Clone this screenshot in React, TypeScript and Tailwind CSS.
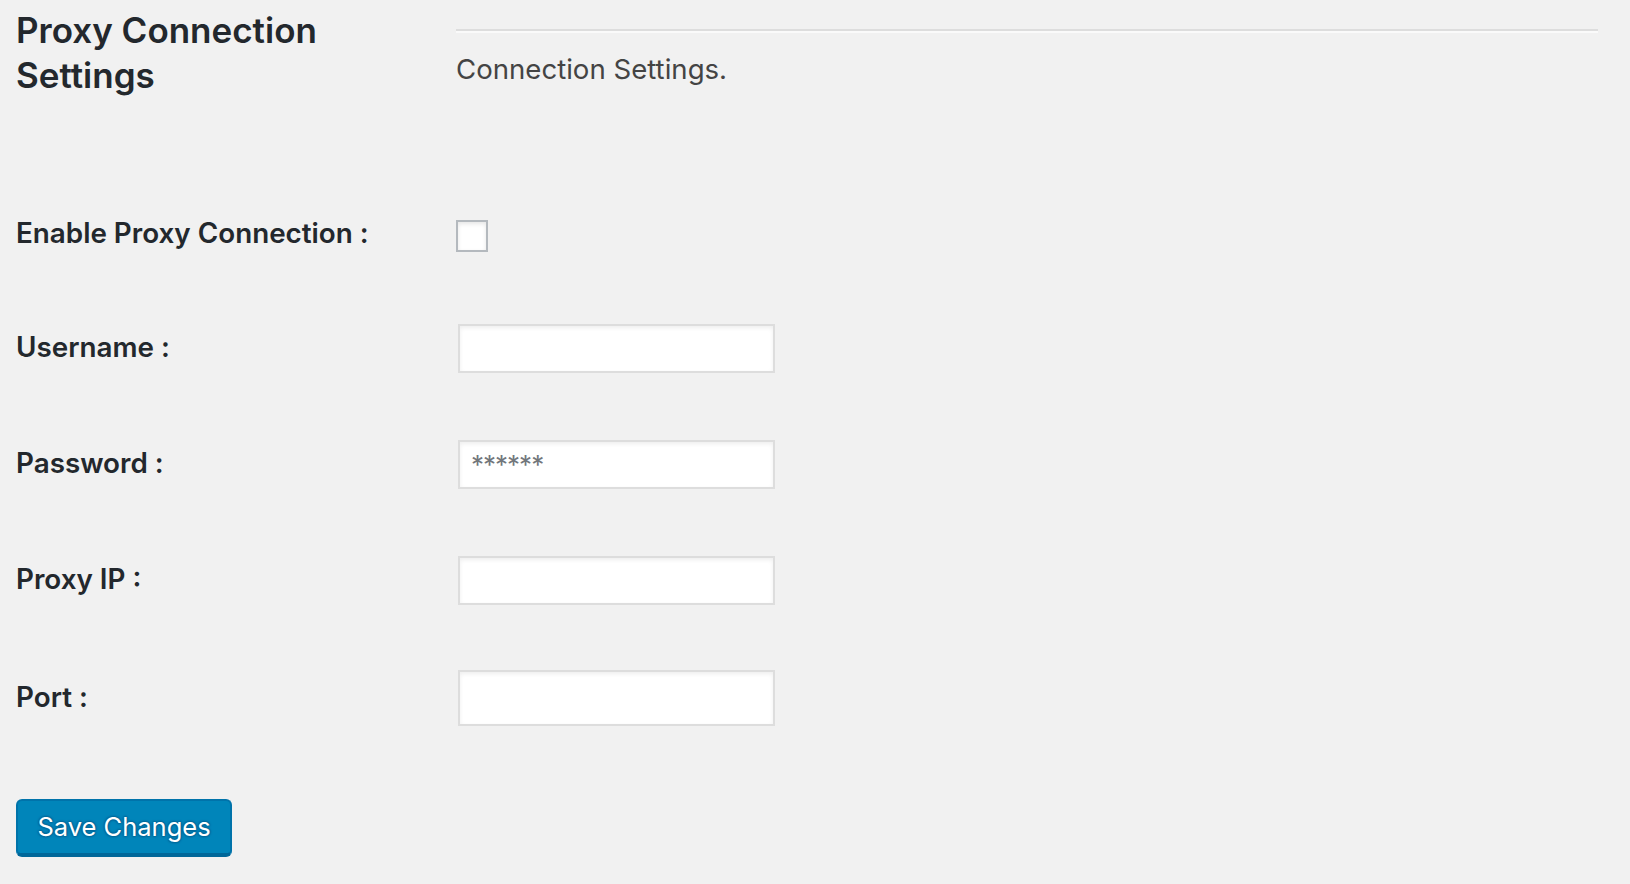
import React from "react";

const font = { fontFamily: "Inter, 'Noto Sans', sans-serif" };

interface IFieldRowProps {
  label: string;
  height: string;
  children: React.ReactNode;
}

const FieldRow = ({ label, height, children }: IFieldRowProps) => {
  return (
    <div className={`grid grid-cols-[440px_1fr] items-center ${height}`}>
      <label className="text-[27.8px] font-semibold text-[#23282d] leading-none">{label}</label>
      <div className="flex items-center">{children}</div>
    </div>
  );
};

const TextInput = ({ placeholder, tall }: { placeholder?: string; tall?: boolean }) => {
  return (
    <input
      type="text"
      placeholder={placeholder}
      className={`ml-[2px] w-[317px] ${tall ? "h-[56px]" : "h-[49px]"} bg-white border-2 border-[#dddddd] shadow-[inset_0_2px_4px_rgba(0,0,0,0.07)] px-[11px] text-[26px] tracking-[-1px] text-[#32373c] placeholder:text-[#72777c] outline-none`}
    />
  );
};

export default function App() {
  return (
    <div className="min-h-screen bg-[#f1f1f1] pl-4 pr-8 pt-2" style={font}>
      <div className="grid grid-cols-[440px_1fr] h-[169px]">
        <h2 className="text-[35px] leading-[45px] font-semibold text-[#23282d]">
          Proxy Connection
          <br />
          Settings
        </h2>
        <div className="pt-[21px]">
          <hr className="border-0 border-t-2 border-b-2 border-t-[#dddddd] border-b-[#fafafa]" />
          <p className="mt-[19px] text-[27.6px] leading-[34px] text-[#444444]">Connection Settings.</p>
        </div>
      </div>

      <FieldRow label="Enable Proxy Connection :" height="h-[113px]">
        <span className="block w-[32px] h-[32px] bg-white border-2 border-[#b4b9be] shadow-[inset_0_2px_4px_rgba(0,0,0,0.1)] translate-y-[2px]" />
      </FieldRow>
      <FieldRow label="Username :" height="h-[116px]">
        <TextInput />
      </FieldRow>
      <FieldRow label="Password :" height="h-[116px]">
        <TextInput placeholder="******" />
      </FieldRow>
      <FieldRow label="Proxy IP :" height="h-[116px]">
        <TextInput />
      </FieldRow>
      <FieldRow label="Port :" height="h-[120px]">
        <TextInput tall />
      </FieldRow>

      <button className="block mt-[41px] w-[216px] h-[58px] rounded-[6px] bg-[#0085ba] border-2 border-[#0073aa] border-b-4 border-b-[#006799] text-white text-[25.5px] leading-none [text-shadow:0_-1px_2px_#006799,1px_0_2px_#006799,0_1px_2px_#006799,-1px_0_2px_#006799]">
        Save Changes
      </button>
    </div>
  );
}
